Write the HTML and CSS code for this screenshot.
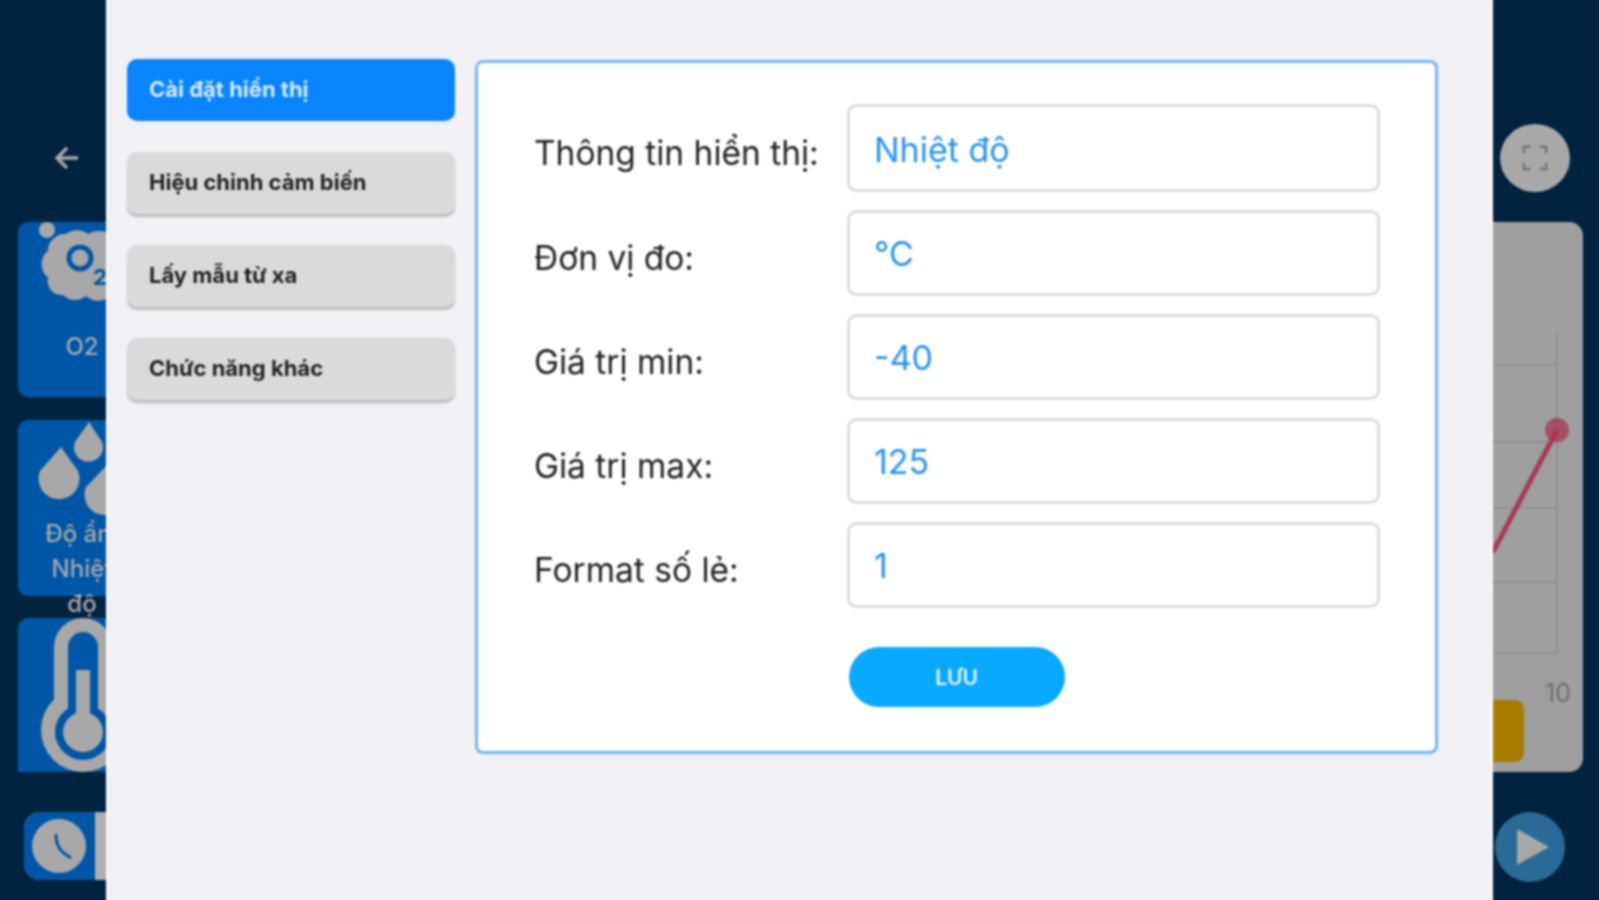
FILE: index.html
```html
<!DOCTYPE html>
<html lang="vi">
<head>
<meta charset="utf-8">
<title>Cài đặt hiển thị</title>
<link rel="stylesheet" href="styles.css">
</head>
<body>
<div class="screen">
<div class="stage">
  <div class="rail rail-left">
    <div class="top-row">
      <svg class="back" viewBox="0 0 28 28"><path d="M25 14H5M14 4L4 14l10 10" fill="none" stroke="#a8a8a8" stroke-width="3.4"/></svg>
    </div>
    <div class="sensor">
      <svg class="s-icon s-o2" viewBox="0 0 110 90">
        <circle cx="9" cy="9" r="8" fill="#a8a8a8"/>
        <path fill="#a8a8a8" d="M28 13c6-5 16-5 22 0 6-4 16-4 22 0 10 0 18 8 18 18 8 6 8 20 0 26 0 10-8 18-18 18-7 7-18 6-24 0-7 6-17 5-23-1-10 1-17-8-15-18-8-5-9-20 0-26-1-9 9-18 18-17z"/>
        <circle cx="42" cy="37" r="11" fill="none" stroke="#0056a6" stroke-width="5"/>
        <text x="55" y="64" class="s-sub">2</text>
      </svg>
      <div class="s-label s-label-o2">O2</div>
    </div>
    <div class="sensor sensor-b">
      <svg class="s-icon s-drop" viewBox="0 0 110 82">
        <path fill="#a8a8a8" d="M49 2l13 20a14.500 14.500 0 1 1-27 0z"/>
        <path fill="#a8a8a8" d="M21 27l17 24a20.500 20.500 0 1 1-38 0z"/>
        <path fill="#a8a8a8" d="M67 45l17 22a20.500 20.500 0 1 1-38 0z"/>
      </svg>
      <div class="s-label">Độ ẩm Nhiệt độ</div>
    </div>
    <div class="sensor sensor-c">
      <svg class="s-icon s-therm" viewBox="0 0 86 154">
        <path fill="#a8a8a8" d="M14 29a29 29 0 0 1 58 0v52.600a42 42 0 1 1-58 0z"/>
        <path fill="#0056a6" d="M28 29a15 15 0 0 1 30 0v61.400a28 28 0 1 1-30 0z"/>
        <path fill="#a8a8a8" d="M36 52h14v43.300a20 20 0 1 1-14 0z"/>
      </svg>
    </div>
    <div class="timebar">
      <div class="clock-cell">
        <svg class="clock" viewBox="0 0 54 54"><circle cx="27" cy="27" r="27" fill="#a8a8a8"/><path d="M24 15c0 11 3 17 15 24" fill="none" stroke="#0056a6" stroke-width="3"/></svg>
      </div>
      <div class="time-fill"></div>
    </div>
  </div>
  <div class="rail rail-right">
    <div class="top-row top-row-right">
      <div class="full-btn">
        <svg viewBox="0 0 28 28"><path d="M2 9V2h7M19 2h7v7M26 19v7h-7M9 26H2v-7" fill="none" stroke="#777" stroke-width="3"/></svg>
      </div>
    </div>
    <div class="chart-card">
      <svg class="chart" viewBox="0 0 184 550">
        <path d="M0 143H158M0 220H158M0 286H158M0 360H158M0 431H158M158 110V431" stroke="#8d8d8d" stroke-width="1.500" fill="none"/>
        <path d="M94 330L158 208" stroke="#a83a56" stroke-width="5" fill="none"/>
        <circle cx="158" cy="208" r="12" fill="#a83a56" opacity=".8"/>
        <text x="146" y="480" class="axis">10</text>
        <rect x="60" y="478" width="65" height="62" rx="9" fill="#a87c00"/>
      </svg>
    </div>
    <div class="play-row">
      <div class="play">
        <svg viewBox="0 0 32 36"><path d="M0 0l32 18L0 36z" fill="#a8a8a8"/></svg>
      </div>
    </div>
  </div>
</div>

<div class="modal">
  <nav class="tabs">
    <div class="tab tab-active">Cài đặt hiển thị</div>
    <div class="tab">Hiệu chỉnh cảm biến</div>
    <div class="tab">Lấy mẫu từ xa</div>
    <div class="tab">Chức năng khác</div>
  </nav>
  <section class="panel">
    <div class="row"><div class="label">Thông tin hiển thị:</div><div class="field field-tall">Nhiệt độ</div></div>
    <div class="row"><div class="label">Đơn vị đo:</div><div class="field">°C</div></div>
    <div class="row"><div class="label">Giá trị min:</div><div class="field">-40</div></div>
    <div class="row"><div class="label">Giá trị max:</div><div class="field">125</div></div>
    <div class="row"><div class="label">Format số lẻ:</div><div class="field">1</div></div>
    <div class="actions"><div class="save">LƯU</div></div>
  </section>
</div>
</div>
</body>
</html>
```
FILE: styles.css
```css
* { box-sizing: border-box; }
html, body { margin: 0; height: 100%; overflow: hidden; background: #00233f; }
.screen {
  position: relative;
  width: 1599px;
  height: 900px;
  background: #00233f;
  font-family: Inter, Roboto, "Noto Sans", sans-serif;
  filter: blur(0.8px);
}
.stage {
  display: flex;
  justify-content: space-between;
  height: 900px;
}
.rail {
  width: 200px;
  display: flex;
  flex-direction: column;
  padding-top: 124px;
}
.rail-left { padding-left: 18px; align-items: flex-start; }
.rail-right { padding-right: 16px; align-items: flex-end; }
.top-row {
  height: 68px;
  margin-bottom: 30px;
  display: flex;
  align-items: center;
}
.top-row-right { margin-right: 13px; }
.back { width: 28px; height: 28px; margin-left: 35px; }
.sensor {
  width: 128px;
  height: 175px;
  border-radius: 10px;
  background: #0056a6;
  margin-bottom: 23px;
  display: flex;
  flex-direction: column;
  align-items: flex-start;
}
.sensor-b { height: 176px; margin-bottom: 22px; }
.sensor-c { height: 154px; margin-bottom: 40px; border-radius: 10px 10px 0 0; }
.s-icon { display: block; flex: none; }
.s-o2 { width: 110px; height: 90px; margin: -1px 0 0 20px; overflow: visible; }
.s-sub { font-size: 22px; font-weight: 700; fill: #0056a6; }
.s-drop { width: 110px; height: 82px; margin: 0 0 0 22px; overflow: visible; }
.s-therm { width: 86px; height: 154px; margin-left: 22px; }
.s-label {
  width: 86px;
  margin: 14px 0 0 21px;
  color: #a8a8a8;
  font-size: 24px;
  font-weight: 500;
  line-height: 35px;
  text-align: center;
}
.s-label-o2 { margin-top: 18px; }
.timebar {
  display: flex;
  width: 150px;
  height: 68px;
  margin-left: 6px;
  border-radius: 16px 0 0 16px;
  overflow: hidden;
  background: #b0b0b0;
}
.clock-cell {
  width: 71px;
  background: #0056a6;
  display: flex;
  align-items: center;
  padding-left: 8px;
}
.clock { width: 54px; height: 54px; }
.time-fill { flex: 1; }
.full-btn {
  width: 70px;
  height: 68px;
  border-radius: 50%;
  background: #a8a8a8;
  display: flex;
  align-items: center;
  justify-content: center;
}
.full-btn svg { width: 26px; height: 26px; }
.chart-card {
  width: 184px;
  height: 550px;
  background: #9e9e9e;
  border-radius: 0 14px 14px 0;
}
.chart { display: block; width: 184px; height: 550px; }
.axis { font-family: Inter, sans-serif; font-size: 25px; fill: #6e6e6e; }
.play-row { margin-top: 40px; margin-right: 18px; }
.play {
  width: 70px;
  height: 70px;
  border-radius: 50%;
  background: #2a6a96;
  display: flex;
  align-items: center;
  justify-content: center;
  padding-left: 6px;
}
.play svg { width: 32px; height: 36px; }

.modal {
  position: absolute;
  top: -6px;
  left: 106px;
  width: 1387px;
  height: 912px;
  background: #f0f0f5;
  border-left: 3px solid #f8f8fb;
  border-right: 3px solid #f8f8fb;
  display: flex;
  align-items: flex-start;
  gap: 20px;
  padding: 65px 0 0 18px;
}
.tabs {
  width: 328px;
  display: flex;
  flex-direction: column;
  gap: 31px;
}
.tab {
  height: 62px;
  border-radius: 10px;
  background: #dadada;
  box-shadow: 0 3px 2px #bcbcbc;
  padding: 0 0 3px 22px;
  display: flex;
  align-items: center;
  color: #222;
  font-size: 22px;
  font-weight: 700;
}
.tab-active {
  background: #0a84ff;
  color: #d5ecff;
  box-shadow: none;
}
.panel {
  width: 963px;
  height: 694px;
  margin-top: 1px;
  background: #fff;
  border: 3px solid #72b6fa;
  border-radius: 8px;
  padding-top: 41px;
}
.row {
  display: flex;
  align-items: center;
  margin: 0 0 18px 56px;
}
.label {
  width: 313px;
  padding-top: 10px;
  color: #222;
  font-size: 33.500px;
  white-space: nowrap;
}
.field {
  width: 533px;
  height: 86px;
  border: 3px solid #dedede;
  border-radius: 9px;
  background: #fff;
  padding: 0 0 0 24px;
  display: flex;
  align-items: center;
  color: #2494f3;
  font-size: 34px;
}
.field-tall { height: 88px; padding-top: 2px; }
.actions {
  display: flex;
  justify-content: center;
  margin-top: 39px;
}
.save {
  width: 216px;
  height: 60px;
  border-radius: 30px;
  background: #08a9ff;
  color: #e4f5ff;
  font-size: 21px;
  font-weight: 600;
  display: flex;
  align-items: center;
  justify-content: center;
}
```
